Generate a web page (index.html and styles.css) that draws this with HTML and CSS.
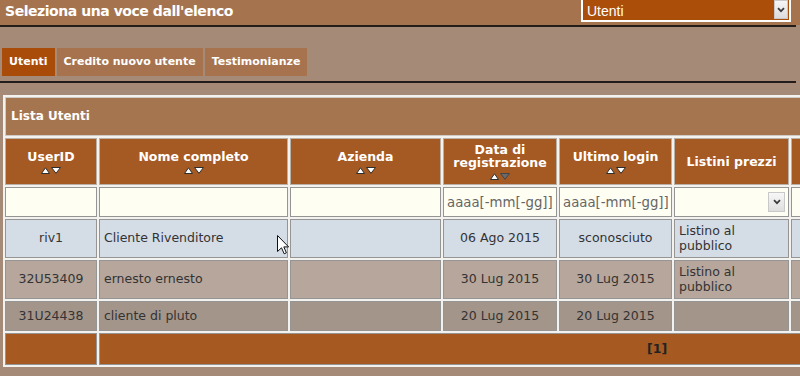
FILE: index.html
```html
<!DOCTYPE html>
<html lang="it">
<head>
<meta charset="utf-8">
<title>Lista Utenti</title>
<link rel="stylesheet" href="styles.css">
</head>
<body>
<header class="topbar">
  <h1 class="title">Seleziona una voce dall'elenco</h1>
  <div class="sel">
    <span class="sel-text">Utenti</span>
    <span class="sel-btn"><svg width="8" height="6" viewBox="0 0 8 6"><path d="M1 1.2 L4 4.2 L7 1.2" fill="none" stroke="#3a3a3a" stroke-width="1.7"/></svg></span>
  </div>
</header>
<div class="rule"></div>
<nav class="tabs">
  <span class="tab active">Utenti</span>
  <span class="tab">Credito nuovo utente</span>
  <span class="tab">Testimonianze</span>
</nav>
<div class="rule second"></div>
<div class="wrap">
<table class="grid">
  <colgroup>
    <col class="c1"><col class="c2"><col class="c3"><col class="c4"><col class="c5"><col class="c6"><col class="c7"><col class="c8">
  </colgroup>
  <tr class="cap-row"><th colspan="8" class="caption">Lista Utenti</th></tr>
  <tr class="head">
    <th><div class="hl">UserID</div><svg class="sort" width="20" height="7" viewBox="0 0 20 7"><polygon points="0.5,6.5 4.5,0.8 8.5,6.5" fill="#fff" stroke="#2e2e2e" stroke-width="1"/><polygon points="10.5,0.5 19.5,0.5 15,6.3" fill="#fff" stroke="#2e2e2e" stroke-width="1"/></svg></th>
    <th><div class="hl">Nome completo</div><svg class="sort" width="20" height="7" viewBox="0 0 20 7"><polygon points="0.5,6.5 4.5,0.8 8.5,6.5" fill="#fff" stroke="#2e2e2e" stroke-width="1"/><polygon points="10.5,0.5 19.5,0.5 15,6.3" fill="#fff" stroke="#2e2e2e" stroke-width="1"/></svg></th>
    <th><div class="hl">Azienda</div><svg class="sort" width="20" height="7" viewBox="0 0 20 7"><polygon points="0.5,6.5 4.5,0.8 8.5,6.5" fill="#fff" stroke="#2e2e2e" stroke-width="1"/><polygon points="10.5,0.5 19.5,0.5 15,6.3" fill="#fff" stroke="#2e2e2e" stroke-width="1"/></svg></th>
    <th><div class="hl">Data di registrazione</div><svg class="sort" width="20" height="7" viewBox="0 0 20 7"><polygon points="0.5,6.5 4.5,0.8 8.5,6.5" fill="#fff" stroke="#2e2e2e" stroke-width="1"/><polygon points="10.5,0.5 19.5,0.5 15,6.3" fill="#6b6b6b" stroke="#444" stroke-width="1"/></svg></th>
    <th><div class="hl">Ultimo login</div><svg class="sort" width="20" height="7" viewBox="0 0 20 7"><polygon points="0.5,6.5 4.5,0.8 8.5,6.5" fill="#fff" stroke="#2e2e2e" stroke-width="1"/><polygon points="10.5,0.5 19.5,0.5 15,6.3" fill="#fff" stroke="#2e2e2e" stroke-width="1"/></svg></th>
    <th><div class="hl">Listini prezzi</div></th>
    <th></th>
    <th></th>
  </tr>
  <tr class="filter">
    <td></td>
    <td></td>
    <td></td>
    <td><input class="finput" type="text" placeholder="aaaa[-mm[-gg]]"></td>
    <td><input class="finput" type="text" placeholder="aaaa[-mm[-gg]]"></td>
    <td><div class="fsel"><span class="fsel-btn"><svg width="8" height="6" viewBox="0 0 8 6"><path d="M1 1.2 L4 4.2 L7 1.2" fill="none" stroke="#3a3a3a" stroke-width="1.7"/></svg></span></div></td>
    <td></td>
    <td></td>
  </tr>
  <tr class="row r1">
    <td class="ctr">riv1</td>
    <td>Cliente Rivenditore</td>
    <td></td>
    <td class="ctr">06 Ago 2015</td>
    <td class="ctr">sconosciuto</td>
    <td>Listino al pubblico</td>
    <td></td>
    <td></td>
  </tr>
  <tr class="row r2">
    <td class="ctr">32U53409</td>
    <td>ernesto ernesto</td>
    <td></td>
    <td class="ctr">30 Lug 2015</td>
    <td class="ctr">30 Lug 2015</td>
    <td>Listino al pubblico</td>
    <td></td>
    <td></td>
  </tr>
  <tr class="row r3">
    <td class="ctr">31U24438</td>
    <td>cliente di pluto</td>
    <td></td>
    <td class="ctr">20 Lug 2015</td>
    <td class="ctr">20 Lug 2015</td>
    <td></td>
    <td></td>
    <td></td>
  </tr>
  <tr class="foot">
    <td></td>
    <td colspan="7" class="pages">[1]</td>
  </tr>
</table>
</div>
<svg class="cursor" width="13" height="20" viewBox="0 0 13 20"><path d="M0.5 0.5 V16.5 L4.5 12.8 L7.2 18.8 L9.4 17.8 L6.8 11.9 H11.6 Z" fill="#fff" stroke="#111" stroke-width="1" stroke-linejoin="miter"/></svg>
</body>
</html>
```

FILE: styles.css
```css
html, body {
  margin: 0;
  padding: 0;
}

body {
  width: 800px;
  height: 376px;
  overflow: hidden;
  position: relative;
  background: #a58a77;
  font-family: "DejaVu Sans", Verdana, sans-serif;
}

.topbar {
  height: 25px;
  background: #a5744f;
  display: flex;
  justify-content: space-between;
  align-items: flex-start;
}

.title {
  margin: 0;
  padding-left: 5px;
  font-size: 14px;
  line-height: 22px;
  font-weight: bold;
  color: #fff;
  letter-spacing: -0.45px;
}

.sel {
  width: 210px;
  height: 22px;
  box-sizing: border-box;
  margin-right: 9px;
  border: 2px solid #fff;
  border-top: 0;
  background: #ab4e0a;
  display: flex;
  align-items: flex-start;
}

.sel-text {
  font-family: "Liberation Sans", Arial, sans-serif;
  font-size: 14px;
  line-height: 20px;
  color: #fff;
  padding-left: 4px;
  padding-top: 1px;
}

.sel-btn {
  margin-left: auto;
  margin-right: 1px;
  width: 14px;
  height: 19px;
  box-sizing: border-box;
  border: 1px solid #c8c8c8;
  background: linear-gradient(#f6f6f6, #dcdcdc);
  display: flex;
  align-items: center;
  justify-content: center;
}

.rule {
  height: 2px;
  background: #221d1a;
  margin-right: 4px;
}

.rule.second {
  margin-top: 5px;
}

.tabs {
  display: flex;
  gap: 2px;
  margin: 21px 0 0 2px;
}

.tab {
  height: 28px;
  line-height: 28px;
  padding: 0 7px;
  font-size: 11px;
  font-weight: bold;
  color: #fff;
  background: #a6734e;
}

.tab.active {
  background: #aa4c09;
}

.wrap {
  margin: 12px 0 0 3px;
}

.grid {
  table-layout: fixed;
  width: 1214px;
  border-collapse: separate;
  border-spacing: 2px;
  background: #f3f2ef;
  font-size: 12.5px;
  color: #333;
}

.c1 { width: 92px; }
.c2 { width: 189px; }
.c3 { width: 151px; }
.c4 { width: 114px; }
.c5 { width: 113px; }
.c6 { width: 115px; }
.c7 { width: 100px; }
.c8 { width: 322px; }

.grid td,
.grid th {
  border: 1px solid #959595;
  padding: 0 4px;
  line-height: 14.5px;
  vertical-align: middle;
  text-align: left;
  overflow: hidden;
}

.cap-row {
  height: 39px;
}

.grid .caption {
  background: #a57550;
  border-color: #cfcac6;
  color: #fff;
  font-size: 12px;
  font-weight: bold;
  padding-left: 5px;
}

.head {
  height: 47px;
}

.grid .head th {
  background: #a65a23;
  color: #fff;
  font-size: 12.5px;
  font-weight: bold;
  text-align: center;
  border-color: #b9b0a8;
  line-height: 13px;
  padding: 0 3px;
}

.hl {
  white-space: normal;
}

.sort {
  display: block;
  margin: 4px auto 0;
}

.filter {
  height: 30px;
}

.grid .filter td {
  background: #fefef2;
  padding: 0 1px;
}

.finput {
  display: block;
  width: 100%;
  box-sizing: border-box;
  border: 0;
  background: transparent;
  padding: 0 2px;
  font-family: "DejaVu Sans", Verdana, sans-serif;
  font-size: 13.3px;
  color: #555;
  outline: none;
}

.finput::placeholder {
  color: #666;
}

.fsel {
  display: flex;
  justify-content: flex-end;
  padding-right: 2px;
}

.fsel-btn {
  width: 17px;
  height: 20px;
  box-sizing: border-box;
  border: 1px solid #c9c9c9;
  background: linear-gradient(#f7f7f7, #dedede);
  display: flex;
  align-items: center;
  justify-content: center;
}

.row.r1, .row.r2 {
  height: 39px;
}

.row.r3 {
  height: 30px;
}

.grid .r1 td { background: #d4dce6; }
.grid .r2 td { background: #b6a69b; }
.grid .r3 td { background: #a4958a; }

.grid td.ctr {
  text-align: center;
}

.foot {
  height: 32px;
}

.grid .foot td {
  background: #a65a22;
}

.grid .foot td.pages {
  text-align: center;
  font-weight: bold;
  color: #222;
}

.cursor {
  position: absolute;
  left: 277px;
  top: 235px;
}
```
